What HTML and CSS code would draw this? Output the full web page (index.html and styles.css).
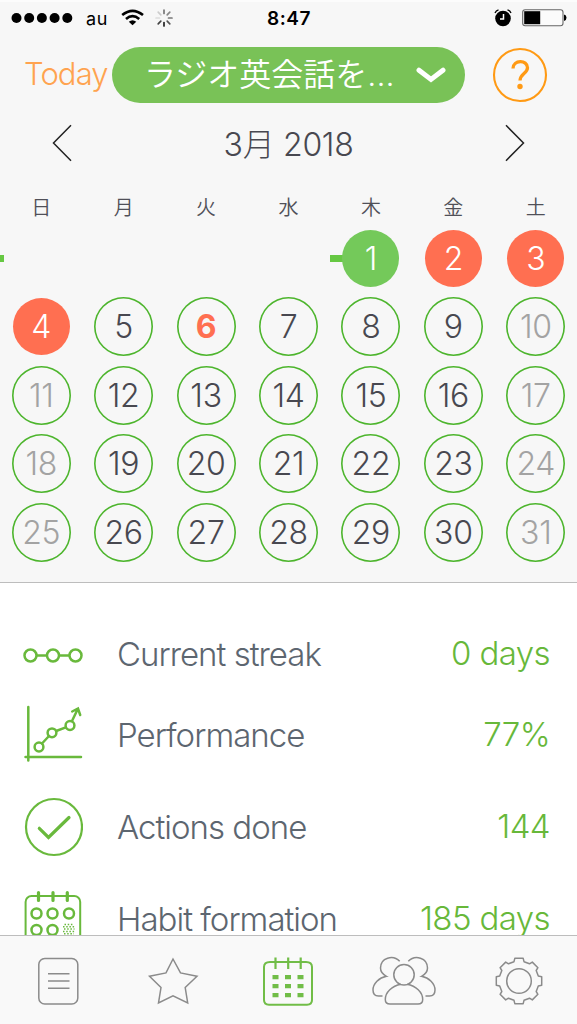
FILE: index.html
```html
<!DOCTYPE html>
<html lang="ja">
<head>
<meta charset="utf-8">
<title>Calendar</title>
<link rel="stylesheet" href="styles.css">
</head>
<body>
<div class="app">
  <section class="top">
    <div class="status">
      <svg class="signal" width="62" height="12" viewBox="0 0 62 12"><circle cx="5.5" cy="6" r="5"/><circle cx="18.2" cy="6" r="5"/><circle cx="30.9" cy="6" r="5"/><circle cx="43.6" cy="6" r="5"/><circle cx="56.3" cy="6" r="5"/></svg>
      <span class="carrier">au</span>
      <svg class="wifi" width="24" height="18" viewBox="0 0 24 18" fill="none" stroke="#000" stroke-width="2.6"><path d="M1.2 6.1Q11.5-2.5 22 6.1M5 10Q11.5 4.3 18.200 10"/><path d="M7.800 12.700Q11.500 9.700 15.300 12.700L11.500 16.300Z" fill="#000" stroke="none"/></svg>
      <svg class="spinner" width="18" height="18" viewBox="-9 -9 18 18" stroke-width="1.700" stroke-linecap="round"><path stroke="#777" d="M0-4.500V-8"/><path stroke="#888" d="M3.200-3.200L5.800-5.800"/><path stroke="#777" d="M4.500 0H8"/><path stroke="#555" d="M3.200 3.200L5.800 5.800"/><path stroke="#222" d="M0 4.500V8"/><path stroke="#444" d="M-3.200 3.200L-5.800 5.800"/><path stroke="#ddd" d="M-4.500 0H-8"/><path stroke="#ccc" d="M-3.200-3.200L-5.800-5.800"/></svg>
      <b class="clock">8:47</b>
      <svg class="alarm" width="18" height="18" viewBox="0 0 18 18"><circle cx="9" cy="9.500" r="7.800"/><path d="M1 4Q2 1.500 4.500.8M13.500.8Q16 1.500 17 4" fill="none" stroke="#000" stroke-width="1.300"/><path d="M9.500 5V10H6" fill="none" stroke="#fff" stroke-width="1.500"/></svg>
      <svg class="battery" width="45" height="18" viewBox="0 0 45 18"><rect x=".7" y=".7" width="40.300" height="16" rx="2.500" fill="#fbfbfb" stroke="#666" stroke-width="1.100"/><rect x="2.200" y="2.200" width="16" height="13"/><path d="M42 5.500Q44.500 6 44.500 8.700T42 12Z"/></svg>
    </div>
    <header class="bar">
      <span class="today">Today</span>
      <div class="pill"><span class="habit">ラジオ英会話を...</span><svg width="30" height="18" viewBox="0 0 30 18" fill="none" stroke="#fff" stroke-width="5" stroke-linecap="round"><path d="M3 4.200L15 13.400L27 4.200"/></svg></div>
      <svg class="help" width="56" height="56" viewBox="0 0 56 56" fill="none" stroke="#ff9a14"><circle cx="28" cy="28" r="26" stroke-width="2.100"/><path d="M21 21.500C21 12.500 35.500 12.500 35.500 20.700C35.500 26.500 28 26.500 28 33.500" stroke-width="3.300"/><circle cx="28" cy="39.500" r="2.700" fill="#ff9a14" stroke="none"/></svg>
    </header>
    <div class="month">
      <svg width="20" height="38" viewBox="0 0 20 38"><path d="M19 1.300L1.500 19L19 36.700"/></svg>
      <span>3月 2018</span>
      <svg width="20" height="38" viewBox="0 0 20 38"><path d="M1 1.300L18.500 19L1 36.700"/></svg>
    </div>
    <div class="week"><span>日</span><span>月</span><span>火</span><span>水</span><span>木</span><span>金</span><span>土</span></div>
    <div class="grid">
      <div class="cell tail"></div><div class="cell"></div><div class="cell"></div><div class="cell"></div>
      <div class="cell link"><i class="day done">1</i></div><div class="cell"><i class="day missed">2</i></div><div class="cell"><i class="day missed">3</i></div>
      <div class="cell"><i class="day missed">4</i></div><div class="cell"><i class="day">5</i></div><div class="cell"><i class="day now">6</i></div><div class="cell"><i class="day">7</i></div><div class="cell"><i class="day">8</i></div><div class="cell"><i class="day">9</i></div><div class="cell"><i class="day off">10</i></div>
      <div class="cell"><i class="day off">11</i></div><div class="cell"><i class="day">12</i></div><div class="cell"><i class="day">13</i></div><div class="cell"><i class="day">14</i></div><div class="cell"><i class="day">15</i></div><div class="cell"><i class="day">16</i></div><div class="cell"><i class="day off">17</i></div>
      <div class="cell"><i class="day off">18</i></div><div class="cell"><i class="day">19</i></div><div class="cell"><i class="day">20</i></div><div class="cell"><i class="day">21</i></div><div class="cell"><i class="day">22</i></div><div class="cell"><i class="day">23</i></div><div class="cell"><i class="day off">24</i></div>
      <div class="cell"><i class="day off">25</i></div><div class="cell"><i class="day">26</i></div><div class="cell"><i class="day">27</i></div><div class="cell"><i class="day">28</i></div><div class="cell"><i class="day">29</i></div><div class="cell"><i class="day">30</i></div><div class="cell"><i class="day off">31</i></div>
    </div>
  </section>
  <main class="stats">
    <div class="stat first">
      <svg width="60" height="60" viewBox="0 0 60 60" class="line"><g stroke-width="2.500"><circle cx="7.500" cy="31.500" r="6"/><circle cx="30" cy="31.500" r="6"/><circle cx="52.500" cy="31.500" r="6"/><path d="M14 31.500H23.500M36.500 31.500H46"/></g></svg>
      <span class="name">Current streak</span><span class="value">0 days</span>
    </div>
    <div class="stat second">
      <svg width="60" height="60" viewBox="0 0 60 60" class="line"><g stroke-width="2.500" stroke-linecap="round"><path d="M5.300 2V55.500M2.500 52H58"/><circle cx="16" cy="42" r="4.400"/><circle cx="29" cy="27.800" r="4.400"/><circle cx="47" cy="20.500" r="4.400"/><path d="M19 38.500L26 31M33.200 26L42.800 22.300M49 16L55 3.500M49.200 6.500L55 3.500L57.200 10"/></g></svg>
      <span class="name">Performance</span><span class="value">77%</span>
    </div>
    <div class="stat third">
      <svg width="60" height="60" viewBox="0 0 60 60" class="line"><circle cx="31" cy="30" r="28" stroke-width="2.200"/><path d="M16.300 31.300L25.500 40.500L46 20.500" stroke-width="3.200" stroke-linecap="round"/></svg>
      <span class="name">Actions done</span><span class="value">144</span>
    </div>
    <div class="stat fourth">
      <svg width="60" height="60" viewBox="0 0 60 60" class="line"><rect x="2.600" y="7" width="54.600" height="58" rx="6" stroke-width="2"/><g stroke-width="3.200" stroke-linecap="round"><path d="M15.500 3.500V11.500M30 3.500V11.500M44.300 3.500V11.500"/></g><g stroke-width="2.500"><circle cx="13.500" cy="24.500" r="5"/><circle cx="29.500" cy="24.500" r="5"/><circle cx="46" cy="24.500" r="5"/><circle cx="13.500" cy="41" r="5"/><circle cx="29.500" cy="41" r="5"/></g><g stroke-width="1.500" stroke-dasharray="1.500 1.700"><path d="M41.500 35.500H51M40 37.800H52M41 40.100H51.500M40 42.400H52M41 44.700H51"/></g></svg>
      <span class="name">Habit formation</span><span class="value">185 days</span>
    </div>
  </main>
  <nav class="tabs">
    <svg width="64" height="56" viewBox="0 0 64 56"><rect x="12.800" y="6.500" width="39" height="45.500" rx="6"/><path d="M22 21.800H43.500M22 29H43.500M22 36.200H43.500"/></svg>
    <svg width="64" height="56" viewBox="0 0 64 56"><path d="M32 7L39.500 20.900L56 24.200L44.200 35.500L46.700 51L32 43.800L17.500 51L20 35.500L8.500 24.200L25 20.900Z"/></svg>
    <svg width="64" height="56" viewBox="0 0 64 56" class="active"><path d="M14 10H50Q56 10 56 15V48Q56 52.700 51 52.700H13Q8 52.700 8 48V15Q8 10 14 10Z"/><path stroke-width="2.200" d="M19.500 5.500V17M32.200 5.500V17M44.700 5.500V17"/><path stroke-width="4.200" d="M16.500 25.200H22.500M29 25.200H35M41.500 25.200H47.500M16.500 34.200H22.500M29 34.200H35M41.500 34.200H47.500M16.500 43.200H22.500M29 43.200H35M41.500 43.200H47.500"/></svg>
    <svg width="64" height="56" viewBox="0 0 64 56"><circle cx="32" cy="22.800" r="10.200"/><path d="M29 32.300C20 34 13.300 40 13.300 47.500C13.300 50.700 15 52 18 52H46C49 52 50.700 50.700 50.700 47.500C50.700 40 44 34 35 32.300"/><path d="M27.700 9.300C21 2.200 8.500 5.800 8.500 16C8.500 19.500 10.500 22.300 14.500 24.300C7 25.700 1 31.500 1 38C1 42.300 3.300 44 6.500 44H10.500M36.300 9.300C43 2.200 55.500 5.800 55.500 16C55.500 19.500 53.500 22.300 49.500 24.300C57 25.700 63 31.500 63 38C63 42.300 60.700 44 57.500 44H53.500"/></svg>
    <svg width="64" height="56" viewBox="-32 -29 64 56"><circle r="12.300"/><path stroke-linejoin="round" d="M-5-19.300L-4.200-22.700H4.200L5-19.300L10.500-17.200L13.300-18.900L18.900-13.300L17.200-10.500L19.300-5L22.700-4.200V4.200L19.300 5L17.200 10.500L18.900 13.300L13.300 18.900L10.500 17.200L5 19.300L4.200 22.700H-4.200L-5 19.300L-10.500 17.200L-13.300 18.900L-18.900 13.300L-17.200 10.500L-19.300 5L-22.700 4.200V-4.200L-19.300-5L-17.200-10.500L-18.900-13.300L-13.300-18.900L-10.500-17.200Z"/></svg>
  </nav>
</div>
</body>
</html>
```
FILE: styles.css
```css
* { box-sizing: border-box; }
body { margin: 0; font-family: Inter, "Noto Sans CJK JP", sans-serif; }
.app { width: 577px; height: 1024px; overflow: hidden; display: flex; flex-direction: column; background: #fff; }
.top { height: 583px; flex: none; background: #f7f7f7; border-top: 2px solid #fcfcfc; border-bottom: 1px solid #bdbdbd; }
.status { height: 35px; display: flex; align-items: center; padding: 0 10px 3px 11px; }
.carrier { font-size: 18px; width: 24px; margin-left: 13px; letter-spacing: .7px; }
.wifi { margin-left: 11px; }
.spinner { margin-left: 10px; }
.clock { font-size: 19px; font-weight: 600; letter-spacing: .5px; margin-left: 94px; width: 50px; }
.alarm { margin-left: auto; }
.battery { margin-left: 10px; }
.bar { height: 76px; display: flex; align-items: center; padding-left: 24px; }
.today { width: 88px; padding-bottom: 4px; font-size: 31px; font-weight: 300; letter-spacing: -.9px; color: #ffa34f; }
.pill { width: 353px; height: 56px; border-radius: 28px; background: #79c257; display: flex; align-items: center; padding-left: 32px; }
.habit { width: 272px; color: #fff; font-size: 32px; font-weight: 350; line-height: 50px; white-space: nowrap; }
.help { margin-left: 27px; }
.month { height: 59px; display: flex; align-items: center; justify-content: space-between; padding: 0 52px; font-size: 32px; font-weight: 300; letter-spacing: -.3px; color: #484850; }
.month span { padding-bottom: 2px; }
.month svg { fill: none; stroke: #222; stroke-width: 1.500; }
.week, .grid { display: grid; grid-template-columns: repeat(7, 1fr); }
.week { height: 52px; padding-top: 22px; font-size: 20px; line-height: 28px; font-weight: 350; color: #505058; text-align: center; }
.grid { grid-auto-rows: 68.500px; }
.cell { display: flex; align-items: center; justify-content: center; }
.tail, .link { background: linear-gradient(#66c843, #66c843) 0 50% / 4px 7px no-repeat; }
.link { background-size: 20px 7px; }
.day { width: 59px; height: 59px; box-shadow: inset 0 0 0 1.600px #4db52d; border-radius: 50%; display: flex; align-items: center; justify-content: center; font-style: normal; font-weight: 300; font-size: 32px; letter-spacing: -.3px; color: #484850; }
.done, .missed { width: 57px; height: 57px; box-shadow: none; color: #fff; }
.done { background: #74c95a; }
.missed { background: #ff6f51; }
.now { color: #ff6f51; font-weight: 700; }
.off { color: #a3a3a3; }
.stats { height: 352px; flex: none; overflow: hidden; padding-top: 41px; }
.stat { height: 60px; display: flex; align-items: center; padding: 0 27px 0 23px; font-size: 33px; font-weight: 300; }
.second { margin-top: 21px; }
.third { margin-top: 32px; }
.fourth { margin-top: 32px; }
.line { fill: none; stroke: #69b93c; }
.name { margin-left: 34px; padding-bottom: 1px; letter-spacing: -1px; color: #5d6670; }
.value { margin-left: auto; padding-bottom: 2px; letter-spacing: -.6px; color: #67b83a; }
.tabs { flex: 1; border-top: 1px solid #bdbdbd; background: #f9f9f9; display: flex; justify-content: space-around; padding: 16px 0 0; }
.tabs svg { fill: none; stroke: #8b8b8b; stroke-width: 1.500; }
.tabs .active { stroke: #71bd47; stroke-width: 2; }
```
